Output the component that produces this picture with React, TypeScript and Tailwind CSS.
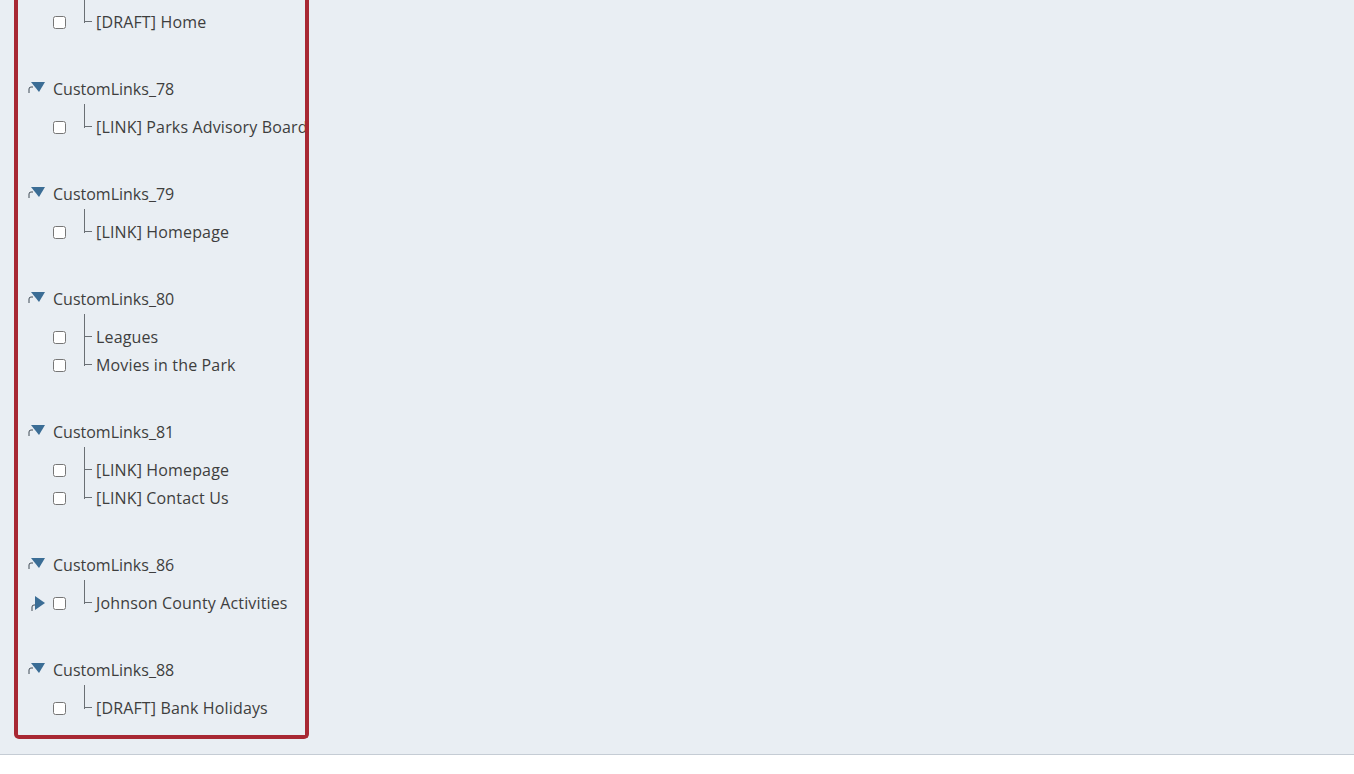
import React from 'react';

type Child = { label: string; expandable?: boolean };
type Group = { name: string; items: Child[] };

const groups: Group[] = [
  { name: 'CustomLinks_78', items: [{ label: '[LINK] Parks Advisory Board' }] },
  { name: 'CustomLinks_79', items: [{ label: '[LINK] Homepage' }] },
  { name: 'CustomLinks_80', items: [{ label: 'Leagues' }, { label: 'Movies in the Park' }] },
  { name: 'CustomLinks_81', items: [{ label: '[LINK] Homepage' }, { label: '[LINK] Contact Us' }] },
  { name: 'CustomLinks_86', items: [{ label: 'Johnson County Activities', expandable: true }] },
  { name: 'CustomLinks_88', items: [{ label: '[DRAFT] Bank Holidays' }] },
];

// little broken-image curl that sits left of each arrow
const Curl = () => (
  <svg width="6" height="7" viewBox="0 0 6 7" className="absolute left-0 bottom-0">
    <path d="M1 7 V3 Q1 1 3 1 H5" fill="none" stroke="#3f4a55" strokeWidth="1" />
  </svg>
);

const ArrowDown = () => (
  <span className="relative block w-[17px] h-[11px]">
    <Curl />
    <svg width="14" height="10" viewBox="0 0 14 10" className="absolute right-0 top-0">
      <path d="M0 0 H14 L8 10 Z" fill="#3b6d95" />
    </svg>
  </span>
);

const ArrowRight = () => (
  <span className="relative block w-[14px] h-[15px]">
    <Curl />
    <svg width="10" height="14" viewBox="0 0 10 14" className="absolute right-0 top-0">
      <path d="M0 0 L10 7 L0 14 Z" fill="#3b6d95" />
    </svg>
  </span>
);

function ChildRow({ item, last, extendTop }: { item: Child; last: boolean; extendTop: string }) {
  return (
    <div className="relative flex items-center h-7">
      <span className="w-[35px] shrink-0 flex items-center justify-start pl-[13px]">
        {item.expandable && <ArrowRight />}
      </span>
      <input type="checkbox" className="m-0 w-[13px] h-[13px] shrink-0" />
      {/* tree connector */}
      <span
        className={`absolute left-[66px] w-[8px] border-l-[1.5px] border-[#6a6f74] ${extendTop} ${last ? 'h-auto bottom-[13px]' : 'bottom-0'}`}
      />
      <span className="absolute left-[67px] top-[13px] w-[7px] border-t-[1.5px] border-[#6a6f74]" />
      <span className="ml-[30px] whitespace-nowrap tracking-[0.15px]">{item.label}</span>
    </div>
  );
}

function GroupBlock({ group }: { group: Group }) {
  return (
    <div className="mt-[38.5px]">
      <div className="flex items-center h-7">
        <span className="w-[35px] shrink-0 flex items-center pl-[10px] -mt-[2px]">
          <ArrowDown />
        </span>
        <span className="whitespace-nowrap">{group.name}</span>
      </div>
      <div className="mt-[10.5px]">
        {group.items.map((item, i) => (
          <ChildRow
            key={i}
            item={item}
            last={i === group.items.length - 1}
            extendTop={i === 0 ? '-top-[9px]' : 'top-0'}
          />
        ))}
      </div>
    </div>
  );
}

export default function App() {
  return (
    <div className="w-[1354px] h-[774px] bg-white overflow-hidden">
      <div className="h-[755px] bg-[#e9eef3] border-b border-[#c5ccd4]">
        <div
          className="ml-[14px] w-[295px] border-4 border-t-0 border-[#a82833] rounded-b-[5px] overflow-hidden pt-2 pb-[13px] text-[16px] text-[#3e3e3e]"
          style={{ fontFamily: '"Open Sans", "Noto Sans", sans-serif' }}
        >
          <ChildRow item={{ label: '[DRAFT] Home' }} last extendTop="-top-[8px]" />
          {groups.map((g) => (
            <GroupBlock key={g.name} group={g} />
          ))}
        </div>
      </div>
    </div>
  );
}
